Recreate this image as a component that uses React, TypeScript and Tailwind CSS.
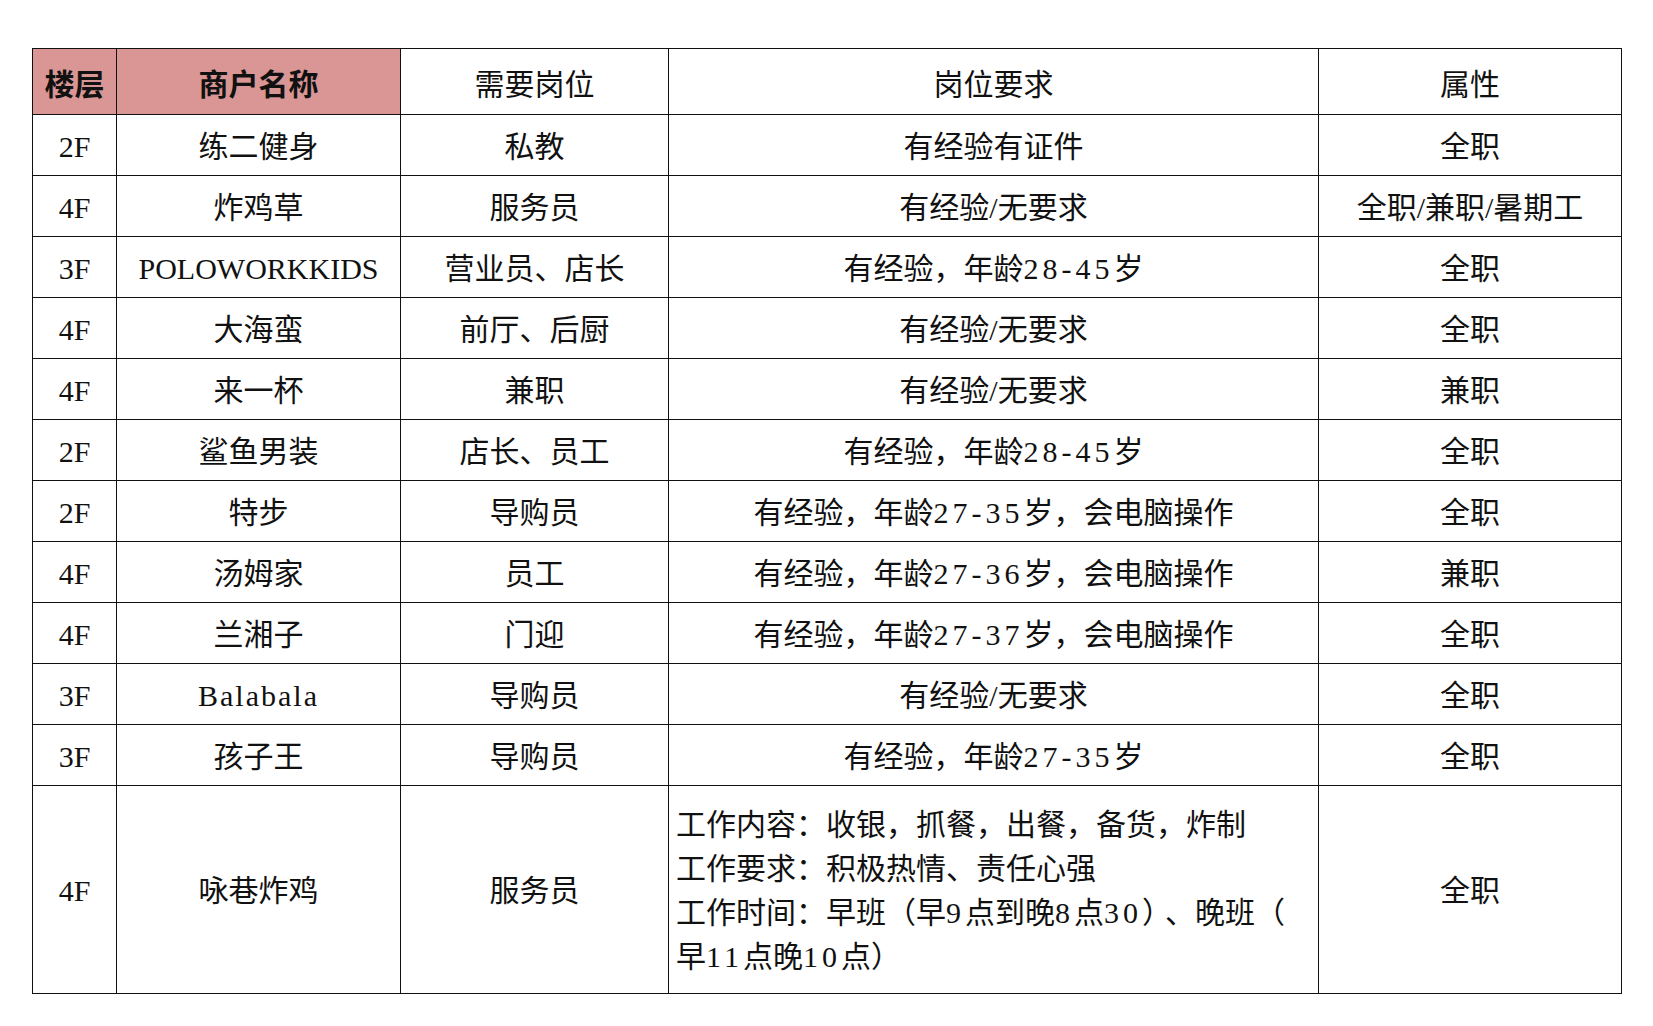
import React from "react";

type Row = { floor: string; name: string; job: string; req: string; type: string };

const rows: Row[] = [
  { floor: "2F", name: "练二健身", job: "私教", req: "有经验有证件", type: "全职" },
  { floor: "4F", name: "炸鸡草", job: "服务员", req: "有经验/无要求", type: "全职/兼职/暑期工" },
  { floor: "3F", name: "POLOWORKKIDS", job: "营业员、店长", req: "有经验，年龄28-45岁", type: "全职" },
  { floor: "4F", name: "大海蛮", job: "前厅、后厨", req: "有经验/无要求", type: "全职" },
  { floor: "4F", name: "来一杯", job: "兼职", req: "有经验/无要求", type: "兼职" },
  { floor: "2F", name: "鲨鱼男装", job: "店长、员工", req: "有经验，年龄28-45岁", type: "全职" },
  { floor: "2F", name: "特步", job: "导购员", req: "有经验，年龄27-35岁，会电脑操作", type: "全职" },
  { floor: "4F", name: "汤姆家", job: "员工", req: "有经验，年龄27-36岁，会电脑操作", type: "兼职" },
  { floor: "4F", name: "兰湘子", job: "门迎", req: "有经验，年龄27-37岁，会电脑操作", type: "全职" },
  { floor: "3F", name: "Balabala", job: "导购员", req: "有经验/无要求", type: "全职" },
  { floor: "3F", name: "孩子王", job: "导购员", req: "有经验，年龄27-35岁", type: "全职" },
];

function Spaced({ text }: { text: string }) {
  const parts = text.split(/([0-9\-]+)/);
  return (
    <>
      {parts.map((p, i) =>
        /^[0-9\-]+$/.test(p) ? (
          <span key={i} className="tracking-[4px]">
            {p}
          </span>
        ) : (
          <React.Fragment key={i}>{p}</React.Fragment>
        )
      )}
    </>
  );
}

const cell = "border-[1.5px] border-[#111] text-center align-middle px-0 pb-0 pt-[3px]";
const head = "border-[1.5px] border-[#111] text-center align-middle px-0 pb-0 pt-[6px]";

export default function App() {
  return (
    <div
      className="min-h-[1026px] w-[1653px] bg-white pt-[48px] pl-[32px] text-[#111] text-[30px] leading-none"
      style={{ fontFamily: '"Liberation Serif", "Noto Sans CJK SC", serif' }}
    >
      <table className="table-fixed border-collapse w-[1589px]">
        <colgroup>
          <col className="w-[84px]" />
          <col className="w-[284px]" />
          <col className="w-[268px]" />
          <col className="w-[650px]" />
          <col className="w-[303px]" />
        </colgroup>
        <thead>
          <tr className="h-[66px]">
            <th className={`${head} bg-[#d99694] font-bold`}>楼层</th>
            <th className={`${head} bg-[#d99694] font-bold`}>商户名称</th>
            <th className={`${head} font-normal`}>需要岗位</th>
            <th className={`${head} font-normal`}>岗位要求</th>
            <th className={`${head} font-normal`}>属性</th>
          </tr>
        </thead>
        <tbody>
          {rows.map((r, i) => (
            <tr key={i} className="h-[61px]">
              <td className={cell}>{r.floor}</td>
              <td className={`${cell} ${r.name === "Balabala" ? "tracking-[2px]" : ""}`}>{r.name}</td>
              <td className={cell}>{r.job}</td>
              <td className={cell}>
                <Spaced text={r.req} />
              </td>
              <td className={cell}>{r.type}</td>
            </tr>
          ))}
          <tr className="h-[208px]">
            <td className={cell}>4F</td>
            <td className={cell}>咏巷炸鸡</td>
            <td className={cell}>服务员</td>
            <td className={`${cell} text-left`}>
              <div className="pl-[7px] leading-[44px] whitespace-nowrap">
                <div>工作内容：收银，抓餐，出餐，备货，炸制</div>
                <div>工作要求：积极热情、责任心强</div>
                <div>
                  工作时间：早班（早<Spaced text="9" />点到晚<Spaced text="8" />点<Spaced text="30" />）<span className="ml-[8px]">、晚班（</span>
                </div>
                <div>
                  早<Spaced text="11" />点晚<Spaced text="10" />点）
                </div>
              </div>
            </td>
            <td className={cell}>全职</td>
          </tr>
        </tbody>
      </table>
    </div>
  );
}
